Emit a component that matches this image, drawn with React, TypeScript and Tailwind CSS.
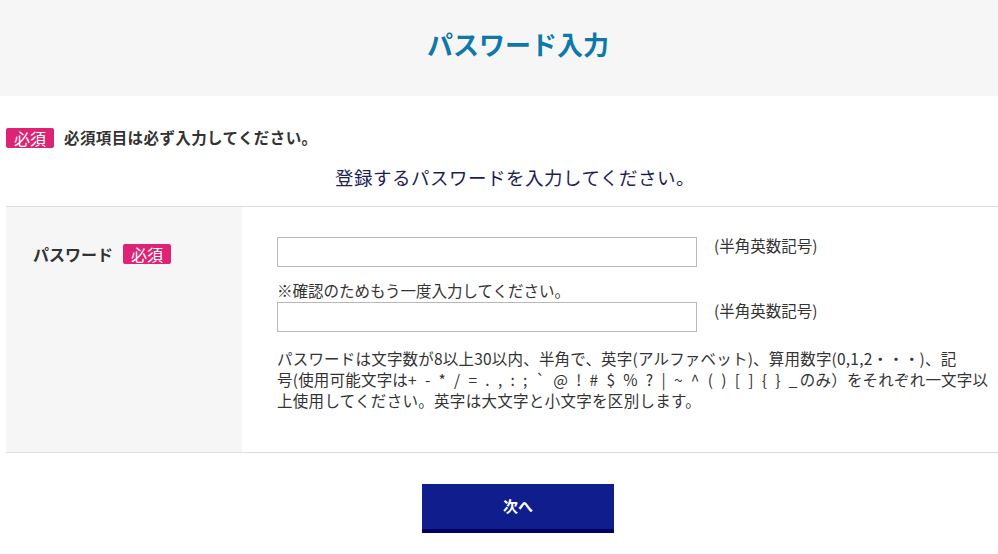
import React from "react";

const font = {
  fontFamily: '"Noto Sans CJK JP", "Noto Sans", sans-serif',
};

function Badge() {
  return (
    <span className="inline-flex items-center justify-center h-[20px] w-[48px] rounded-[2px] bg-[#dd2373] text-white text-[16px] leading-none">
      必須
    </span>
  );
}

function PasswordRow() {
  return (
    <div className="flex items-center">
      <input
        type="password"
        className="w-[420px] h-[30px] border border-[#b8b8b8] bg-white outline-none"
      />
      <span className="ml-[17px] -mt-[12px]">(半角英数記号)</span>
    </div>
  );
}

export default function App() {
  return (
    <div className="w-[998px] min-h-[554px] bg-white text-[#333]" style={font}>
      <header className="h-[96px] bg-[#f6f6f6] flex items-center justify-center pl-[38px]">
        <h1 className="text-[26px] font-bold text-[#0e78aa] -mt-[10px]">
          パスワード入力
        </h1>
      </header>

      <div className="pl-[6px]">
        <div className="flex items-center gap-[10px] mt-[32px] h-[20px]">
          <Badge />
          <span className="text-[15.5px] font-bold text-[#333] tracking-[0.4px]">
            必須項目は必ず入力してください。
          </span>
        </div>

        <p className="mt-[18px] text-center pl-[26px] text-[18.5px] tracking-[0.5px] text-[#1d1d55] leading-[22px]">
          登録するパスワードを入力してください。
        </p>

        <div className="mt-[18px] border-t border-b border-[#dedede] flex">
          <div className="w-[236px] shrink-0 bg-[#f6f6f6] pl-[27px] pt-[37px]">
            <div className="flex items-center gap-[10px] h-[20px]">
              <span className="text-[16px] font-bold text-[#333]">パスワード</span>
              <Badge />
            </div>
          </div>

          <div className="flex-1 pl-[35px] pr-[10px] pt-[30px] pb-[41px] text-[15.5px]">
            <PasswordRow />

            <p className="mt-[12px] leading-[23px]">
              ※確認のためもう一度入力してください。
            </p>
            <PasswordRow />

            <p className="mt-[16px] leading-[21px] tracking-[0.2px] whitespace-nowrap">
              パスワードは文字数が8以上30以内、半角で、英字(アルファベット)、算用数字(0,1,2・・・)、記
              <br />
              号(使用可能文字は
              <span className="tracking-[2.4px]">
                + - * / = . , : ; ` @ ! # $ % ? | ~ ^ ( ) [ ] {"{"} {"}"} _
              </span>
              のみ）をそれぞれ一文字以
              <br />
              <span className="tracking-[0.3px]">上使用してください。英字は大文字と小文字を区別します。</span>
            </p>
          </div>
        </div>

        <div className="flex justify-center pl-[32px] mt-[31px]">
          <button className="w-[192px] h-[49px] bg-[#101d8d] border-b-[4px] border-[#000066] text-white text-[15px] font-bold">
            次へ
          </button>
        </div>
      </div>
    </div>
  );
}
